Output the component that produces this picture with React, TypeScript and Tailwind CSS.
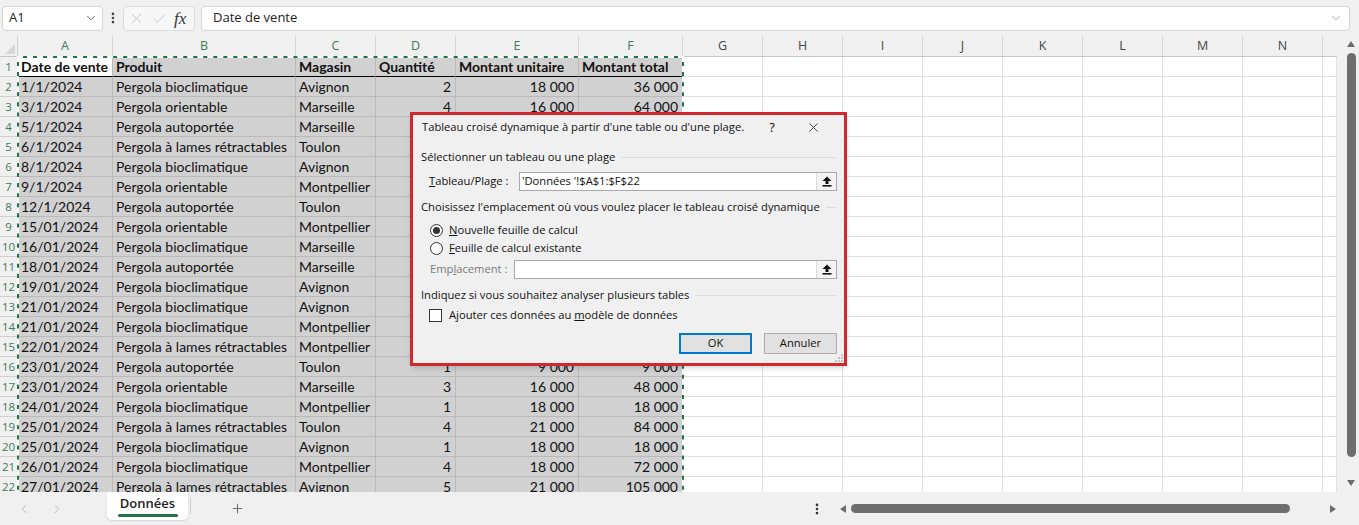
import { ChevronDown, ChevronLeft, ChevronRight, Check, X, Plus, EllipsisVertical } from "lucide-react";

const letters = ["A", "B", "C", "D", "E", "F", "G", "H", "I", "J", "K", "L", "M", "N"];
const colW = [
  "w-[95px]", "w-[183px]", "w-[80px]", "w-[80px]", "w-[123px]", "w-[104px]",
  "w-[80px]", "w-[80px]", "w-[80px]", "w-[80px]", "w-[80px]", "w-[80px]", "w-[80px]", "w-[80px]",
];

const data: string[][] = [
  ["Date de vente", "Produit", "Magasin", "Quantité", "Montant unitaire", "Montant total"],
  ["1/1/2024", "Pergola bioclimatique", "Avignon", "2", "18 000", "36 000"],
  ["3/1/2024", "Pergola orientable", "Marseille", "4", "16 000", "64 000"],
  ["5/1/2024", "Pergola autoportée", "Marseille", "3", "9 000", "27 000"],
  ["6/1/2024", "Pergola à lames rétractables", "Toulon", "1", "21 000", "21 000"],
  ["8/1/2024", "Pergola bioclimatique", "Avignon", "2", "18 000", "36 000"],
  ["9/1/2024", "Pergola orientable", "Montpellier", "5", "16 000", "80 000"],
  ["12/1/2024", "Pergola autoportée", "Toulon", "2", "9 000", "18 000"],
  ["15/01/2024", "Pergola orientable", "Montpellier", "3", "16 000", "48 000"],
  ["16/01/2024", "Pergola bioclimatique", "Marseille", "1", "18 000", "18 000"],
  ["18/01/2024", "Pergola autoportée", "Marseille", "4", "9 000", "36 000"],
  ["19/01/2024", "Pergola bioclimatique", "Avignon", "2", "18 000", "36 000"],
  ["21/01/2024", "Pergola bioclimatique", "Avignon", "3", "18 000", "54 000"],
  ["21/01/2024", "Pergola bioclimatique", "Montpellier", "2", "18 000", "36 000"],
  ["22/01/2024", "Pergola à lames rétractables", "Montpellier", "1", "21 000", "21 000"],
  ["23/01/2024", "Pergola autoportée", "Toulon", "1", "9 000", "9 000"],
  ["23/01/2024", "Pergola orientable", "Marseille", "3", "16 000", "48 000"],
  ["24/01/2024", "Pergola bioclimatique", "Montpellier", "1", "18 000", "18 000"],
  ["25/01/2024", "Pergola à lames rétractables", "Toulon", "4", "21 000", "84 000"],
  ["25/01/2024", "Pergola bioclimatique", "Avignon", "1", "18 000", "18 000"],
  ["26/01/2024", "Pergola bioclimatique", "Montpellier", "4", "18 000", "72 000"],
  ["27/01/2024", "Pergola à lames rétractables", "Avignon", "5", "21 000", "105 000"],
];

const UpBtn = () => (
  <div className="w-[20px] h-full border-l border-[#dadada] bg-[#f4f4f4] flex items-center justify-center">
    <svg width="10" height="11" viewBox="0 0 10 11">
      <path d="M5 0.5 L9.5 5 H6.5 V8 H3.5 V5 H0.5 Z" fill="#111" />
      <rect x="0.5" y="9" width="9" height="1.6" fill="#111" />
    </svg>
  </div>
);

const Section = ({ label }: { label: string }) => (
  <div className="flex items-center h-[16px] pl-[8px]">
    <span className="whitespace-nowrap">{label}</span>
    <div className="flex-1 h-px bg-[#dcdcdc] ml-[6px] mr-[8px]" />
  </div>
);

const Dialog = () => (
  <div className="absolute left-[410px] top-[112px] w-[437px] h-[254px] border-[3px] border-[#d3262f] bg-[#f0f0f0] shadow-md font-['Open_Sans',sans-serif] text-[11.2px] text-[#111] flex flex-col">
    <div className="h-[27px] flex items-center pl-[9px]">
      <span className="whitespace-nowrap">Tableau croisé dynamique à partir d'une table ou d'une plage.</span>
      <span className="ml-[25px] text-[13px]">?</span>
      <X className="ml-[31px] w-[15px] h-[15px]" strokeWidth={1.2} />
    </div>
    <div className="mt-[9px]">
      <Section label="Sélectionner un tableau ou une plage" />
    </div>
    <div className="mt-[6px] h-[20px] flex items-center pl-[16px] pr-[7px]">
      <span className="w-[90px] whitespace-nowrap">
        <span className="underline">T</span>ableau/Plage :
      </span>
      <div className="flex-1 h-full bg-white border border-[#a8a8a8] flex items-center">
        <span className="flex-1 pl-[2px]">'Données '!$A$1:$F$22</span>
        <UpBtn />
      </div>
    </div>
    <div className="mt-[9px]">
      <Section label="Choisissez l'emplacement où vous voulez placer le tableau croisé dynamique" />
    </div>
    <div className="mt-[6px] h-[18px] flex items-center pl-[17px]">
      <div className="w-[13px] h-[13px] rounded-full border border-[#333] bg-white flex items-center justify-center">
        <div className="w-[7px] h-[7px] rounded-full bg-[#333]" />
      </div>
      <span className="ml-[6px]">
        <span className="underline">N</span>ouvelle feuille de calcul
      </span>
    </div>
    <div className="mt-[1px] h-[18px] flex items-center pl-[17px]">
      <div className="w-[13px] h-[13px] rounded-full border border-[#333] bg-white" />
      <span className="ml-[6px]">
        <span className="underline">F</span>euille de calcul existante
      </span>
    </div>
    <div className="mt-[3px] h-[20px] flex items-center pl-[17px] pr-[7px]">
      <span className="w-[84px] whitespace-nowrap text-[#7a7a7a]">
        Emp<span className="underline">l</span>acement :
      </span>
      <div className="flex-1 h-full bg-white border border-[#a8a8a8] flex items-center">
        <span className="flex-1" />
        <UpBtn />
      </div>
    </div>
    <div className="mt-[8px]">
      <Section label="Indiquez si vous souhaitez analyser plusieurs tables" />
    </div>
    <div className="mt-[4px] h-[18px] flex items-center pl-[16px]">
      <div className="w-[13px] h-[13px] border border-[#333] bg-white" />
      <span className="ml-[7px]">
        Ajouter ces données au <span className="underline">m</span>odèle de données
      </span>
    </div>
    <div className="mt-[9px] h-[21px] flex justify-end pr-[7px] gap-[12px]">
      <div className="w-[73px] h-full border-2 border-[#0078d7] bg-[#e1e1e1] flex items-center justify-center">OK</div>
      <div className="w-[73px] h-full border border-[#adadad] bg-[#e1e1e1] flex items-center justify-center">Annuler</div>
    </div>
    <div className="flex-1 flex justify-end items-end pr-[1px] pb-[1px]">
      <svg width="8" height="8" viewBox="0 0 8 8">
        <rect x="6" y="0" width="2" height="2" fill="#c4c4c4" />
        <rect x="3" y="3" width="2" height="2" fill="#c4c4c4" />
        <rect x="6" y="3" width="2" height="2" fill="#c4c4c4" />
        <rect x="0" y="6" width="2" height="2" fill="#c4c4c4" />
        <rect x="3" y="6" width="2" height="2" fill="#c4c4c4" />
        <rect x="6" y="6" width="2" height="2" fill="#c4c4c4" />
      </svg>
    </div>
  </div>
);

const TopBar = () => (
  <div className="h-[36px] bg-[#f0f0f0] flex items-center font-['Open_Sans',sans-serif]">
    <div className="ml-[2px] w-[101px] h-[25px] bg-white border border-[#d4d4d4] rounded-[4px] flex items-center justify-between pl-[6px] pr-[4px] text-[13px] text-[#222]">
      <span>A1</span>
      <ChevronDown className="w-[14px] h-[14px] text-[#555]" strokeWidth={1.5} />
    </div>
    <div className="w-[20px] flex justify-center">
      <EllipsisVertical className="w-[14px] h-[14px] text-[#444]" strokeWidth={2.5} />
    </div>
    <div className="w-[72px] h-[25px] border border-[#dcdcdc] rounded-[4px] bg-[#f7f7f7] flex items-center gap-[6px] pl-[4px]">
      <X className="w-[17px] h-[17px] text-[#b8b8b8]" strokeWidth={1} />
      <Check className="w-[17px] h-[17px] text-[#b8b8b8]" strokeWidth={1} />
      <span className="font-['Liberation_Serif',serif] italic text-[17px] text-[#333] leading-none">fx</span>
    </div>
    <div className="ml-[6px] mr-[9px] flex-1 h-[25px] bg-white border border-[#d4d4d4] rounded-[4px] flex items-center justify-between pl-[11px] pr-[6px] text-[13px] text-[#222]">
      <span>Date de vente</span>
      <ChevronDown className="w-[14px] h-[14px] text-[#888]" strokeWidth={1.2} />
    </div>
  </div>
);

const Grid = () => (
  <div className="relative flex-1 h-full overflow-hidden bg-white font-['Lato',sans-serif] text-[14px] text-[#111]">
    <div className="flex h-[21px] bg-[#f0f0f0] border-b border-[#c6c6c6] font-['Open_Sans',sans-serif] text-[12.5px]">
      <div className="w-[18px] border-r border-[#d0d0d0] flex items-end justify-end p-[2px]">
        <svg width="10" height="10" viewBox="0 0 10 10">
          <polygon points="10,0 10,10 0,10" fill="#d6d6d6" />
        </svg>
      </div>
      {letters.map((l, i) => (
        <div
          key={l}
          className={`${colW[i]} border-r border-[#d6d6d6] flex items-center justify-center ${i < 6 ? "text-[#3f7b5a]" : "text-[#444]"}`}
        >
          {l}
        </div>
      ))}
      <div className="flex-1" />
    </div>
    {data.map((row, r) => (
      <div key={r} className="flex h-[20px]">
        <div className="w-[18px] shrink-0 bg-[#f0f0f0] border-r border-b border-[#d0d0d0] flex items-center justify-center font-['Open_Sans',sans-serif] text-[11.5px] text-[#3f7b5a] overflow-hidden">
          {r + 1}
        </div>
        {letters.map((l, c) => {
          const sel = c < 6;
          const active = r === 0 && c === 0;
          const num = c >= 3 && r > 0;
          const bg = active ? "bg-white" : sel ? "bg-[#d1d1d1]" : "bg-white";
          const bb = r === 0 && sel ? "border-b border-b-black" : sel ? "border-b border-b-[#bababa]" : "border-b border-b-[#e1e1e1]";
          const br = sel ? "border-r border-r-[#bababa]" : "border-r border-r-[#e1e1e1]";
          return (
            <div
              key={l}
              className={`${colW[c]} shrink-0 ${bg} ${bb} ${br} flex items-center overflow-hidden whitespace-nowrap ${num ? "justify-end pr-[4px]" : "pl-[3px]"} ${r === 0 ? "font-bold" : ""}`}
            >
              {sel ? row[c] : ""}
            </div>
          );
        })}
        <div className="flex-1 border-b border-[#e1e1e1] border-r" />
      </div>
    ))}
    {/* marching ants around A1:F22 */}
    <div className="absolute left-[17px] top-[20px] w-[667px] h-[460px] border-2 border-[#217346] pointer-events-none" />
    <div className="absolute left-[17px] top-[20px] w-[667px] h-[460px] border-2 border-dashed border-white pointer-events-none" />
  </div>
);

const Triangle = ({ dir }: { dir: "up" | "down" | "left" | "right" }) => {
  const pts = { up: "4,0 8,6 0,6", down: "0,0 8,0 4,6", left: "6,0 6,8 0,4", right: "0,0 6,4 0,8" }[dir];
  const horiz = dir === "left" || dir === "right";
  return (
    <svg width={horiz ? 6 : 8} height={horiz ? 8 : 6} viewBox={horiz ? "0 0 6 8" : "0 0 8 6"}>
      <polygon points={pts} fill="#6b6b6b" />
    </svg>
  );
};

const BottomBar = () => (
  <div className="h-[33px] bg-[#f0f0f0] flex items-start font-['Open_Sans',sans-serif]">
    <div className="pl-[17px] h-full flex items-center">
      <ChevronLeft className="w-[14px] h-[14px] text-[#a9a9a9]" strokeWidth={1.3} />
      <ChevronRight className="ml-[19px] w-[14px] h-[14px] text-[#a9a9a9]" strokeWidth={1.3} />
    </div>
    <div className="ml-[43px] w-[81px] h-[28px] bg-white rounded-b-[5px] shadow-[0_1px_2px_rgba(0,0,0,0.12)] flex flex-col items-center pt-[3px]">
      <span className="text-[13px] font-semibold text-[#222] leading-[16px]">Données</span>
      <div className="mt-[3px] w-[60px] h-[3px] rounded-full bg-[#217346]" />
    </div>
    <div className="ml-[2px] mt-[6px] w-px h-[17px] bg-[#cfcfcf]" />
    <div className="ml-[39px] h-full flex items-center">
      <Plus className="w-[15px] h-[15px] text-[#444]" strokeWidth={1.2} />
    </div>
    <div className="ml-[565px] h-full flex items-center">
      <EllipsisVertical className="w-[14px] h-[14px] text-[#333]" strokeWidth={2.5} />
    </div>
    <div className="ml-[16px] h-full flex items-center">
      <Triangle dir="left" />
      <div className="ml-[5px] w-[439px] h-[9px] rounded-full bg-[#6e6e6e]" />
      <div className="w-[40px]" />
      <Triangle dir="right" />
    </div>
  </div>
);

const App = () => {
  return (
    <div className="relative w-[1359px] h-[525px] overflow-hidden bg-[#f0f0f0]">
      <TopBar />
      <div className="flex h-[456px]">
        <Grid />
        <div className="w-[22px] bg-[#f0f0f0] flex flex-col items-center pt-[5px] pl-[6px]">
          <Triangle dir="up" />
          <div className="mt-[6px] w-[9px] h-[404px] rounded-full bg-[#6e6e6e]" />
          <div className="mt-[23px]">
            <Triangle dir="down" />
          </div>
        </div>
      </div>
      <BottomBar />
      <Dialog />
    </div>
  );
};

export default App;
